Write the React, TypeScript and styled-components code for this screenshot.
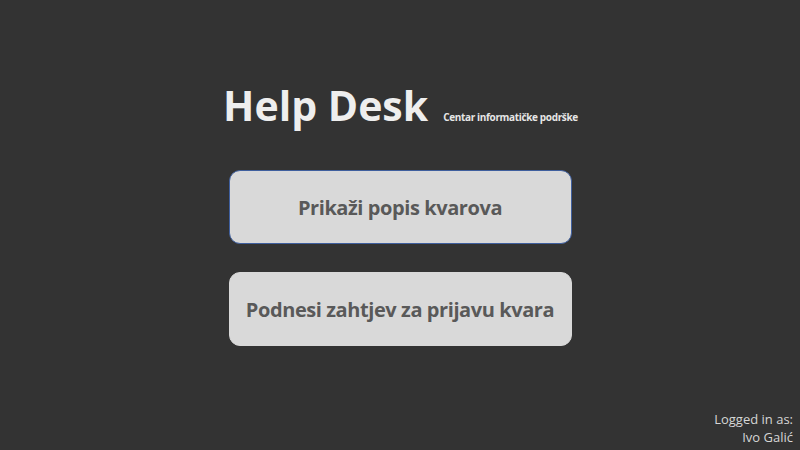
import React from "react";
import styled, { createGlobalStyle } from "styled-components";

const Global = createGlobalStyle`
  html, body { margin: 0; padding: 0; background: #333333; }
  body { font-family: "Open Sans", "Noto Sans", sans-serif; }
  #root { height: 100vh; }
`;

const Page = styled.div`
  height: 100vh;
  display: flex;
  flex-direction: column;
  align-items: center;
  background: #333333;
  box-sizing: border-box;
`;

const Header = styled.header`
  display: flex;
  align-items: baseline;
  gap: 15px;
  margin-top: 77px;
  padding-left: 1px;
`;

const Title = styled.h1`
  margin: 0;
  font-size: 41px;
  line-height: 56px;
  font-weight: 700;
  color: #eeeeee;
  letter-spacing: 0;
`;

const Subtitle = styled.span`
  font-size: 10px;
  font-weight: 700;
  color: #e6e6e6;
  letter-spacing: -0.35px;
`;

const Menu = styled.nav`
  display: flex;
  flex-direction: column;
  gap: 28px;
  margin-top: 37px;
`;

const MenuButton = styled.button<{ $focused?: boolean }>`
  width: 343px;
  height: 74px;
  box-sizing: border-box;
  border-radius: 11px;
  background: #d9d9d9;
  border: 1px solid ${(p) => (p.$focused ? "#3f5f9e" : "#d9d9d9")};
  color: #595959;
  font-family: "Open Sans", "Noto Sans", sans-serif;
  font-size: 20px;
  font-weight: 700;
  letter-spacing: -0.42px;
  cursor: pointer;
  padding: 0;
`;

const Footer = styled.footer`
  margin-top: auto;
  align-self: flex-end;
  text-align: right;
  padding: 0 7px 4px 0;
  font-size: 13px;
  line-height: 18px;
  color: #d6d6d6;
`;

export default function App() {
  return (
    <>
      <Global />
      <Page>
        <Header>
          <Title>Help Desk</Title>
          <Subtitle>Centar informatičke podrške</Subtitle>
        </Header>
        <Menu>
          <MenuButton $focused>Prikaži popis kvarova</MenuButton>
          <MenuButton>Podnesi zahtjev za prijavu kvara</MenuButton>
        </Menu>
        <Footer>
          Logged in as:
          <br />
          Ivo Galić
        </Footer>
      </Page>
    </>
  );
}
